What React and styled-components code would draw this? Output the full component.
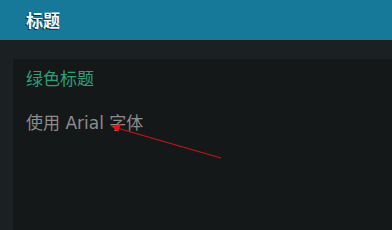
import React from "react";
import styled, { createGlobalStyle } from "styled-components";

const GlobalStyle = createGlobalStyle`
  html, body {
    margin: 0;
    padding: 0;
    background: #1b2022;
    font-family: "DejaVu Sans", "Noto Sans CJK SC", sans-serif;
  }
`;

const Page = styled.div`
  position: relative;
  width: 392px;
  height: 230px;
  overflow: hidden;
  display: flex;
  flex-direction: column;
`;

const Header = styled.header`
  height: 40px;
  background: #17799a;
  display: flex;
  align-items: center;
  padding: 0 0 2px 26px;
  box-sizing: border-box;
  color: #f4f8fa;
  font-size: 17px;
  font-weight: bold;
  text-shadow: -1px 1px 0 rgba(0, 0, 0, 0.6);
`;

const Body = styled.main`
  flex: 1;
  padding: 19px 0 0 13px;
  display: flex;
`;

const Panel = styled.section`
  flex: 1;
  background: #151819;
  padding: 10px 13px;
`;

const Line = styled.p`
  margin: 0 0 24px;
  font-size: 17px;
  line-height: 20px;
  color: ${({ tone }) => (tone === "green" ? "#2e9e78" : "#8c8c8c")};
`;

const Arrow = () => (
  <svg
    width="392"
    height="230"
    style={{ position: "absolute", left: 0, top: 0, pointerEvents: "none" }}
  >
    <line x1="221" y1="158" x2="117" y2="128" stroke="#c81414" strokeWidth="1.2" />
    <polygon points="111,126 121,124 118,132" fill="#e01515" />
  </svg>
);

export default function App() {
  return (
    <>
      <GlobalStyle />
      <Page>
        <Header>标题</Header>
        <Body>
          <Panel>
            <Line tone="green">绿色标题</Line>
            <Line>使用 Arial 字体</Line>
          </Panel>
        </Body>
        <Arrow />
      </Page>
    </>
  );
}
